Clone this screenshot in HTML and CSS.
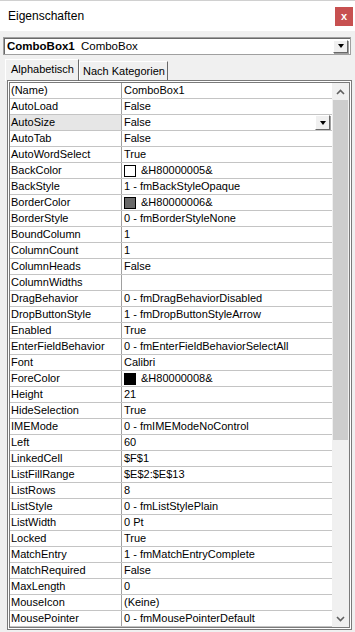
FILE: index.html
```html
<!DOCTYPE html>
<html lang="de">
<head>
  <meta charset="UTF-8">
  <title>Eigenschaften</title>
  <link rel="stylesheet" href="styles.css">
</head>
<body>
  <div class="titlebar">
    <span class="title">Eigenschaften</span>
    <span class="close">x</span>
  </div>

  <div class="objsel">
    <span class="objname"><b>ComboBox1</b> ComboBox</span>
    <span class="dropbtn"><i class="tri"></i></span>
  </div>

  <div class="tabs">
    <div class="tab active">Alphabetisch</div>
    <div class="tab">Nach Kategorien</div>
  </div>

  <div class="frame">
    <div class="props">
      <div class="row"><div class="pname">(Name)</div><div class="pval">ComboBox1</div></div>
      <div class="row"><div class="pname">AutoLoad</div><div class="pval">False</div></div>
      <div class="row selected"><div class="pname">AutoSize</div><div class="pval">False<span class="dropbtn small"><i class="tri"></i></span></div></div>
      <div class="row"><div class="pname">AutoTab</div><div class="pval">False</div></div>
      <div class="row"><div class="pname">AutoWordSelect</div><div class="pval">True</div></div>
      <div class="row"><div class="pname">BackColor</div><div class="pval"><span class="swatch" style="background:#ffffff"></span>&amp;H80000005&amp;</div></div>
      <div class="row"><div class="pname">BackStyle</div><div class="pval">1 - fmBackStyleOpaque</div></div>
      <div class="row"><div class="pname">BorderColor</div><div class="pval"><span class="swatch" style="background:#696969"></span>&amp;H80000006&amp;</div></div>
      <div class="row"><div class="pname">BorderStyle</div><div class="pval">0 - fmBorderStyleNone</div></div>
      <div class="row"><div class="pname">BoundColumn</div><div class="pval">1</div></div>
      <div class="row"><div class="pname">ColumnCount</div><div class="pval">1</div></div>
      <div class="row"><div class="pname">ColumnHeads</div><div class="pval">False</div></div>
      <div class="row"><div class="pname">ColumnWidths</div><div class="pval"></div></div>
      <div class="row"><div class="pname">DragBehavior</div><div class="pval">0 - fmDragBehaviorDisabled</div></div>
      <div class="row"><div class="pname">DropButtonStyle</div><div class="pval">1 - fmDropButtonStyleArrow</div></div>
      <div class="row"><div class="pname">Enabled</div><div class="pval">True</div></div>
      <div class="row"><div class="pname">EnterFieldBehavior</div><div class="pval">0 - fmEnterFieldBehaviorSelectAll</div></div>
      <div class="row"><div class="pname">Font</div><div class="pval">Calibri</div></div>
      <div class="row"><div class="pname">ForeColor</div><div class="pval"><span class="swatch" style="background:#000000"></span>&amp;H80000008&amp;</div></div>
      <div class="row"><div class="pname">Height</div><div class="pval">21</div></div>
      <div class="row"><div class="pname">HideSelection</div><div class="pval">True</div></div>
      <div class="row"><div class="pname">IMEMode</div><div class="pval">0 - fmIMEModeNoControl</div></div>
      <div class="row"><div class="pname">Left</div><div class="pval">60</div></div>
      <div class="row"><div class="pname">LinkedCell</div><div class="pval">$F$1</div></div>
      <div class="row"><div class="pname">ListFillRange</div><div class="pval">$E$2:$E$13</div></div>
      <div class="row"><div class="pname">ListRows</div><div class="pval">8</div></div>
      <div class="row"><div class="pname">ListStyle</div><div class="pval">0 - fmListStylePlain</div></div>
      <div class="row"><div class="pname">ListWidth</div><div class="pval">0 Pt</div></div>
      <div class="row"><div class="pname">Locked</div><div class="pval">True</div></div>
      <div class="row"><div class="pname">MatchEntry</div><div class="pval">1 - fmMatchEntryComplete</div></div>
      <div class="row"><div class="pname">MatchRequired</div><div class="pval">False</div></div>
      <div class="row"><div class="pname">MaxLength</div><div class="pval">0</div></div>
      <div class="row"><div class="pname">MouseIcon</div><div class="pval">(Keine)</div></div>
      <div class="row"><div class="pname">MousePointer</div><div class="pval">0 - fmMousePointerDefault</div></div>
    </div>

    <div class="scrollbar">
      <div class="sb-btn">
        <svg width="9" height="6" viewBox="0 0 9 6"><polyline points="1,5 4.5,1.5 8,5" fill="none" stroke="#606060" stroke-width="1.6"/></svg>
      </div>
      <div class="sb-thumb"></div>
      <div class="sb-track"></div>
      <div class="sb-btn">
        <svg width="9" height="6" viewBox="0 0 9 6"><polyline points="1,1 4.5,4.5 8,1" fill="none" stroke="#606060" stroke-width="1.6"/></svg>
      </div>
    </div>
  </div>
</body>
</html>
```

FILE: styles.css
```css
body {
  margin: 0;
  width: 355px;
  height: 632px;
  overflow: hidden;
  background-color: #f0f0f0;
  font-family: "Liberation Sans", Arial, sans-serif;
  font-size: 11px;
  color: #000;
}
.titlebar {
  height: 31px;
  box-sizing: border-box;
  background-color: #fff;
  border-top: 1px solid #d0d0d0;
  display: flex;
  justify-content: space-between;
  padding-left: 8px;
}
.title {
  font-size: 12px;
  line-height: 30px;
}
.close {
  width: 18px;
  height: 19px;
  margin-top: 6px;
  margin-right: 2px;
  background-color: #c75050;
  color: #fff;
  font-weight: bold;
  font-size: 11px;
  line-height: 18px;
  text-align: center;
}
.objsel {
  margin: 6px 4px 0 3px;
  height: 18px;
  box-sizing: border-box;
  background-color: #fff;
  border: 1px solid #a0a0a0;
  box-shadow: inset 1px 1px 0 #696969;
  display: flex;
  align-items: center;
  justify-content: space-between;
  padding: 0 2px 0 3px;
}
.objname {
  font-size: 11.5px;
  line-height: 16px;
}
.objname b {
  margin-right: 3px;
}
.dropbtn {
  width: 15px;
  height: 13px;
  box-sizing: border-box;
  background-color: #f0f0f0;
  border: 1px solid;
  border-color: #fff #696969 #696969 #fff;
  box-shadow: 1px 1px 0 #a0a0a0;
  display: flex;
  align-items: center;
  justify-content: center;
}
.tri {
  width: 0;
  height: 0;
  border-left: 3px solid transparent;
  border-right: 3px solid transparent;
  border-top: 4px solid #000;
}
.dropbtn.small {
  height: 15px;
  margin-left: auto;
  margin-right: 2px;
}
.tabs {
  display: flex;
  align-items: flex-end;
  height: 25px;
  padding-left: 5px;
}
.tab {
  flex-shrink: 0;
  box-sizing: border-box;
  width: 89px;
  height: 19px;
  line-height: 18px;
  padding-left: 3px;
  font-size: 11px;
  white-space: nowrap;
  border-top: 1px solid #fff;
  border-left: 1px solid #fff;
  border-right: 1px solid #696969;
}
.tab.active {
  width: 74px;
  height: 22px;
  line-height: 19px;
  padding-left: 5px;
  position: relative;
  top: 1px;
}
.frame {
  margin: 0 3px 0 7px;
  height: 550px;
  box-sizing: border-box;
  border: 3px double #7a7a7a;
  display: flex;
  overflow: hidden;
  background-color: #fff;
}
.props {
  flex: 1;
}
.row {
  display: grid;
  grid-template-columns: 112px 1fr;
  height: 16px;
  box-sizing: border-box;
  border-bottom: 1px solid #c4c4c4;
  line-height: 15px;
  white-space: nowrap;
}
.pname {
  padding-left: 1px;
  border-right: 1px solid #a0a0a0;
  overflow: hidden;
}
.pval {
  padding-left: 2px;
  display: flex;
  align-items: center;
  overflow: hidden;
}
.row.selected .pname {
  background-color: #e6e6e6;
}
.swatch {
  width: 10px;
  height: 10px;
  border: 1px solid #000;
  margin-right: 5px;
}
.scrollbar {
  width: 17px;
  display: flex;
  flex-direction: column;
  background-color: #f0f0f0;
}
.sb-btn {
  height: 17px;
  display: flex;
  align-items: center;
  justify-content: center;
}
.sb-thumb {
  height: 340px;
  margin: 0 1px;
  background-color: #cdcdcd;
}
.sb-track {
  flex: 1;
}
```
